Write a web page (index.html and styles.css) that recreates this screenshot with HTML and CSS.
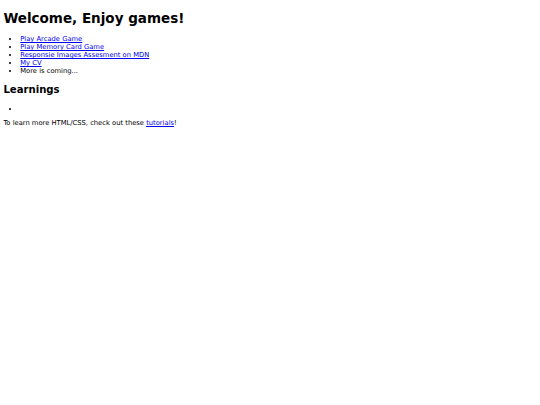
FILE: index.html
```html
<!DOCTYPE html>
<html lang="en">
<head>
<meta charset="utf-8">
<title>Welcome, Enjoy games!</title>
<link rel="stylesheet" href="styles.css">
</head>
<body>
<h1 class="title">Welcome, Enjoy games!</h1>
<ul class="links">
<li><a href="#">Play Arcade Game</a></li>
<li><a href="#">Play Memory Card Game</a></li>
<li><a href="#">Responsie Images Assesment on MDN</a></li>
<li><a href="#">My CV</a></li>
<li>More is coming...</li>
</ul>
<h2 class="subtitle">Learnings</h2>
<ul class="learnings">
<li></li>
</ul>
<p class="note">To learn more HTML/CSS, check out these <a href="#">tutorials</a>!</p>
</body>
</html>
```
FILE: styles.css
```css
body {
  margin: 3.375px;
  font-family: "DejaVu Sans", Verdana, sans-serif;
  font-size: 6.75px;
  color: #000;
  background: #fff;
}
a {
  color: #0000ee;
}
.title {
  font-size: 13.5px;
  margin: 7.05px 0 9.05px;
}
.links {
  margin: 6.75px 0;
  padding-left: 16.875px;
}
.subtitle {
  font-size: 10.125px;
  margin: 8.4px 0 10.4px;
}
.learnings {
  margin: 6.75px 0 5.6px;
  padding-left: 16.875px;
}
.note {
  margin: 5.6px 0 6.75px;
}
```
